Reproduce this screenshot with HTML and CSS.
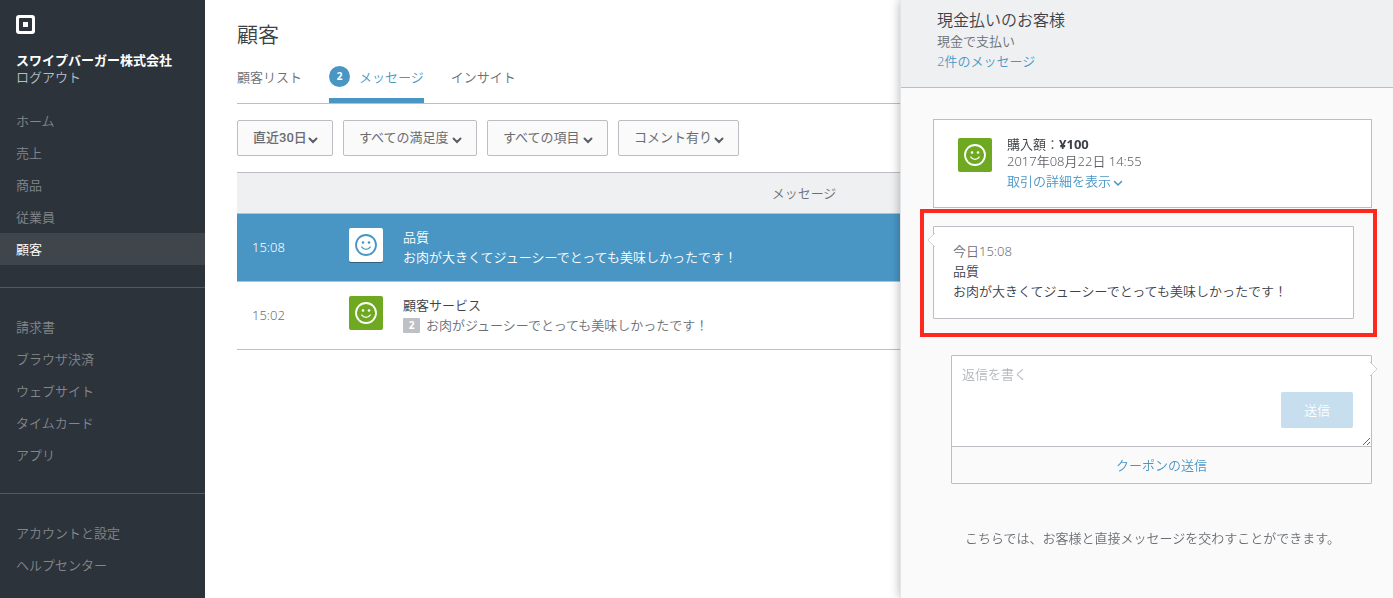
FILE: index.html
```html
<!DOCTYPE html>
<html lang="ja">
<head>
<meta charset="utf-8">
<meta name="viewport" content="width=device-width, initial-scale=1">
<title>顧客</title>
<link rel="stylesheet" href="styles.css">
</head>
<body>
<svg class="sprite" aria-hidden="true">
  <symbol id="smile" viewBox="0 0 34 34">
    <circle cx="17" cy="17" r="10" fill="none" stroke="currentColor" stroke-width="1.800"/>
    <circle cx="14" cy="14.500" r="1.300" fill="currentColor"/>
    <circle cx="20" cy="14.500" r="1.300" fill="currentColor"/>
    <path d="M12.800 19c1 1.700 2.400 2.400 4.200 2.400s3.200-.7 4.200-2.400" fill="none" stroke="currentColor" stroke-width="1.400" stroke-linecap="round"/>
  </symbol>
  <symbol id="chevron" viewBox="0 0 10 8">
    <path d="M1.500 2.500L5 6l3.500-3.500" fill="none" stroke="currentColor" stroke-linecap="round"/>
  </symbol>
</svg>
<div class="app">
  <aside class="sidebar">
    <div class="brand">
      <svg class="logo" viewBox="0 0 19 19" role="img" aria-label="Square">
        <rect width="19" height="19" rx="3" fill="#fff"/>
        <rect x="3" y="3" width="13" height="13" rx="1" fill="#2d333b"/>
        <rect x="7" y="7" width="5" height="5" fill="#fff"/>
      </svg>
      <strong class="company">スワイプバーガー株式会社</strong>
      <a class="logout" href="#">ログアウト</a>
    </div>
    <nav>
      <ul class="nav-group">
        <li><a class="nav-link" href="#">ホーム</a></li>
        <li><a class="nav-link" href="#">売上</a></li>
        <li><a class="nav-link" href="#">商品</a></li>
        <li><a class="nav-link" href="#">従業員</a></li>
        <li><a class="nav-link nav-link-active" href="#" aria-current="page">顧客</a></li>
      </ul>
      <ul class="nav-group">
        <li><a class="nav-link" href="#">請求書</a></li>
        <li><a class="nav-link" href="#">ブラウザ決済</a></li>
        <li><a class="nav-link" href="#">ウェブサイト</a></li>
        <li><a class="nav-link" href="#">タイムカード</a></li>
        <li><a class="nav-link" href="#">アプリ</a></li>
      </ul>
      <ul class="nav-group">
        <li><a class="nav-link" href="#">アカウントと設定</a></li>
        <li><a class="nav-link" href="#">ヘルプセンター</a></li>
      </ul>
    </nav>
  </aside>

  <main class="main">
    <h1 class="title">顧客</h1>
    <nav class="tabs">
      <a class="tab" href="#">顧客リスト</a>
      <a class="tab tab-active" href="#" aria-current="page"><span class="count">2</span>メッセージ</a>
      <a class="tab" href="#">インサイト</a>
    </nav>
    <div class="filters">
      <div class="filter">
        <select class="filter-select filter-period" aria-label="期間"><option>直近30日</option></select>
        <svg class="filter-chevron" aria-hidden="true"><use href="#chevron"/></svg>
      </div>
      <div class="filter">
        <select class="filter-select" aria-label="満足度"><option>すべての満足度</option></select>
        <svg class="filter-chevron" aria-hidden="true"><use href="#chevron"/></svg>
      </div>
      <div class="filter">
        <select class="filter-select" aria-label="項目"><option>すべての項目</option></select>
        <svg class="filter-chevron" aria-hidden="true"><use href="#chevron"/></svg>
      </div>
      <div class="filter">
        <select class="filter-select" aria-label="コメント"><option>コメント有り</option></select>
        <svg class="filter-chevron" aria-hidden="true"><use href="#chevron"/></svg>
      </div>
    </div>
    <table class="messages">
      <thead>
        <tr><th colspan="3" scope="col">メッセージ</th></tr>
      </thead>
      <tbody>
        <tr class="row-selected">
          <td class="cell-time">15:08</td>
          <td class="cell-face"><svg class="face" aria-hidden="true"><use href="#smile"/></svg></td>
          <td class="cell-text">
            <div class="topic">品質</div>
            <div class="excerpt">お肉が大きくてジューシーでとっても美味しかったです！</div>
          </td>
        </tr>
        <tr>
          <td class="cell-time">15:02</td>
          <td class="cell-face"><svg class="face" aria-hidden="true"><use href="#smile"/></svg></td>
          <td class="cell-text">
            <div class="topic">顧客サービス</div>
            <div class="excerpt"><span class="unread">2</span>お肉がジューシーでとっても美味しかったです！</div>
          </td>
        </tr>
      </tbody>
    </table>
  </main>
</div>

<aside class="drawer">
  <header class="drawer-head">
    <h2 class="customer">現金払いのお客様</h2>
    <p class="payment">現金で支払い</p>
    <a class="link" href="#">2件のメッセージ</a>
  </header>
  <div class="drawer-body">
    <section class="purchase">
      <svg class="face" aria-hidden="true"><use href="#smile"/></svg>
      <div>
        <p class="amount">購入額：<strong>¥100</strong></p>
        <p class="date">2017年08月22日 14:55</p>
        <a class="link" href="#">取引の詳細を表示<svg class="link-chevron" aria-hidden="true"><use href="#chevron"/></svg></a>
      </div>
    </section>
    <section class="bubble">
      <svg class="tail tail-left" viewBox="0 0 8 14" aria-hidden="true"><path d="M8 0L1 7l7 7" fill="#fff" stroke="#cfd1d5"/></svg>
      <p class="sent-at">今日15:08</p>
      <p>品質</p>
      <p>お肉が大きくてジューシーでとっても美味しかったです！</p>
    </section>
    <form class="composer">
      <div class="composer-field">
        <textarea class="reply" placeholder="返信を書く" aria-label="返信を書く"></textarea>
        <button class="send" type="button" disabled>送信</button>
      </div>
      <a class="link coupon" href="#">クーポンの送信</a>
      <svg class="tail tail-right" viewBox="0 0 8 14" aria-hidden="true"><path d="M0 0l7 7-7 7" fill="#fff" stroke="#cfd1d5"/></svg>
    </form>
    <p class="note">こちらでは、お客様と直接メッセージを交わすことができます。</p>
  </div>
</aside>
</body>
</html>
```
FILE: styles.css
```css
* {
  box-sizing: border-box;
}

body {
  margin: 0;
  background: #fff;
  color: #3d4248;
  font: 350 13px/20px "Noto Sans", "Noto Sans CJK JP", sans-serif;
}

h1,
h2,
p,
ul {
  margin: 0;
  padding: 0;
  font-weight: inherit;
}

ul {
  list-style: none;
}

a {
  color: inherit;
  text-decoration: none;
}

.sprite {
  position: absolute;
  width: 0;
  height: 0;
}

.app {
  display: flex;
  min-height: 100vh;
}

/* Sidebar */
.sidebar {
  flex: none;
  width: 205px;
  background: #2d333b;
}

.brand {
  display: flex;
  flex-direction: column;
  align-items: flex-start;
  padding: 15px 16px 19px;
  line-height: 17px;
}

.logo {
  width: 19px;
  height: 19px;
  margin-bottom: 18px;
}

.company {
  color: #fff;
  white-space: nowrap;
}

.logout {
  color: #b9bcc0;
}

.nav-group {
  padding-bottom: 22px;
}

.nav-group + .nav-group {
  padding-top: 23px;
  border-top: 1px solid #54595f;
}

.nav-link {
  display: block;
  padding: 6px 16px;
  color: #83878b;
}

.nav-link-active {
  background: #40454c;
  color: #fff;
}

/* Main column */
.main {
  flex: 1;
  min-width: 0;
  padding: 20px 22px 20px 32px;
}

.title {
  font-size: 21px;
  line-height: 28px;
}

.tabs {
  display: flex;
  gap: 27px;
  margin-top: 18px;
  border-bottom: 1px solid #bcbec3;
  color: #6c7076;
}

.tab {
  display: flex;
  align-items: center;
  gap: 9px;
  height: 37px;
  padding-bottom: 16px;
}

.tab-active {
  padding-bottom: 11px;
  border-bottom: 5px solid #4996c5;
  color: #4996c5;
}

.count {
  width: 21px;
  border-radius: 50%;
  background: #4996c5;
  color: #fff;
  font-size: 10px;
  font-weight: 700;
  line-height: 21px;
  text-align: center;
}

.filters {
  display: flex;
  gap: 10px;
  padding: 16px 0;
}

.filter {
  position: relative;
}

.filter-select {
  appearance: none;
  height: 36px;
  padding: 0 25px 0 15px;
  border: 1px solid #bcbec3;
  border-radius: 2px;
  background: #fafafa;
  color: #696c72;
  font: 400 13px/20px Roboto, "Noto Sans CJK JP", sans-serif;
}

.filter-period {
  font-weight: 500;
}

.filter-chevron {
  position: absolute;
  top: 16px;
  right: 15px;
  width: 10px;
  height: 8px;
  color: #5b5f65;
  stroke-width: 2;
  pointer-events: none;
}

/* Message list */
.messages {
  width: 100%;
  border-spacing: 0;
  color: #6c7076;
}

.messages th {
  padding: 10px 0;
  border: solid #bcbec3;
  border-width: 1px 0;
  background: #eff0f2;
  font-weight: inherit;
}

.messages td {
  padding: 13px 0 14px;
  border-bottom: 1px solid #bcbec3;
}

.messages .cell-time {
  width: 112px;
  padding-left: 15px;
}

.messages .cell-face {
  width: 54px;
  padding-top: 14px;
  vertical-align: top;
}

.face {
  display: block;
  flex: none;
  width: 34px;
  height: 34px;
  border-radius: 2px;
  background: #6fa921;
  color: #fff;
}

.topic {
  color: #3d4248;
}

.row-selected,
.row-selected .topic {
  background: #4996c5;
  color: #fff;
}

.row-selected .face {
  background: #fff;
  color: #4996c5;
  box-shadow: 0 1px 0 #345f7c;
}

.unread {
  display: inline-block;
  width: 17px;
  margin-right: 6px;
  background: #bdc0c5;
  border-radius: 1px;
  color: #fff;
  font-size: 10px;
  font-weight: 700;
  line-height: 15px;
  text-align: center;
  vertical-align: 1px;
}

/* Customer drawer */
.drawer {
  position: fixed;
  top: 0;
  right: 0;
  bottom: 0;
  width: 493px;
  border-left: 1px solid #e3e4e6;
  background: #fafafa;
  box-shadow: 0 0 10px rgba(0, 0, 0, 0.3);
}

.drawer-head {
  padding: 10px 36px 16px;
  border-bottom: 1px solid #bcbec3;
  background: #eff0f2;
}

.customer {
  font-size: 16px;
  line-height: 21px;
}

.payment,
.sent-at {
  color: #6c7076;
}

.link {
  display: block;
  color: #4996c5;
}

.drawer-body {
  padding: 31px 21px 31px 32px;
}

.purchase {
  display: flex;
  gap: 15px;
  padding: 16px 24px;
  border: 1px solid #bcbec3;
  background: #fff;
}

.purchase .face {
  margin-top: 2px;
}

.amount,
.date {
  line-height: 17px;
}

.date {
  margin-bottom: 1px;
  color: #5b5f65;
}

.link-chevron {
  width: 10px;
  height: 8px;
  margin-left: 2px;
  stroke-width: 1.5;
  vertical-align: -1px;
}

.bubble {
  position: relative;
  margin: 18px 18px 36px 0;
  padding: 14px 19px 17px;
  border: 1px solid #bcbec3;
  border-radius: 1px;
  background: #fff;
}

/* Highlight frame around the received message */
.bubble::after {
  content: "";
  position: absolute;
  inset: -18px -24px -19px -14px;
  border: 4px solid #fd281e;
  pointer-events: none;
}

.tail {
  position: absolute;
  top: 6px;
  width: 8px;
  height: 14px;
}

.tail-left {
  left: -7px;
}

.tail-right {
  right: -7px;
}

.composer {
  position: relative;
  margin-left: 18px;
  border: 1px solid #bcbec3;
  border-radius: 1px;
}

.composer-field {
  position: relative;
  border-bottom: 1px solid #bcbec3;
}

.reply {
  display: block;
  width: 100%;
  height: 90px;
  padding: 8px 10px;
  border: 0;
  background: #fff;
  color: #3d4248;
  font: inherit;
  resize: vertical;
}

.reply::placeholder {
  color: #b4b7bc;
}

.send {
  position: absolute;
  right: 18px;
  bottom: 18px;
  width: 72px;
  height: 36px;
  border: 0;
  border-radius: 2px;
  background: #c6deed;
  color: #fff;
  font: inherit;
}

.coupon {
  padding: 8px;
  text-align: center;
}

.note {
  margin-top: 44px;
  color: #6c7076;
  text-align: center;
}
```
